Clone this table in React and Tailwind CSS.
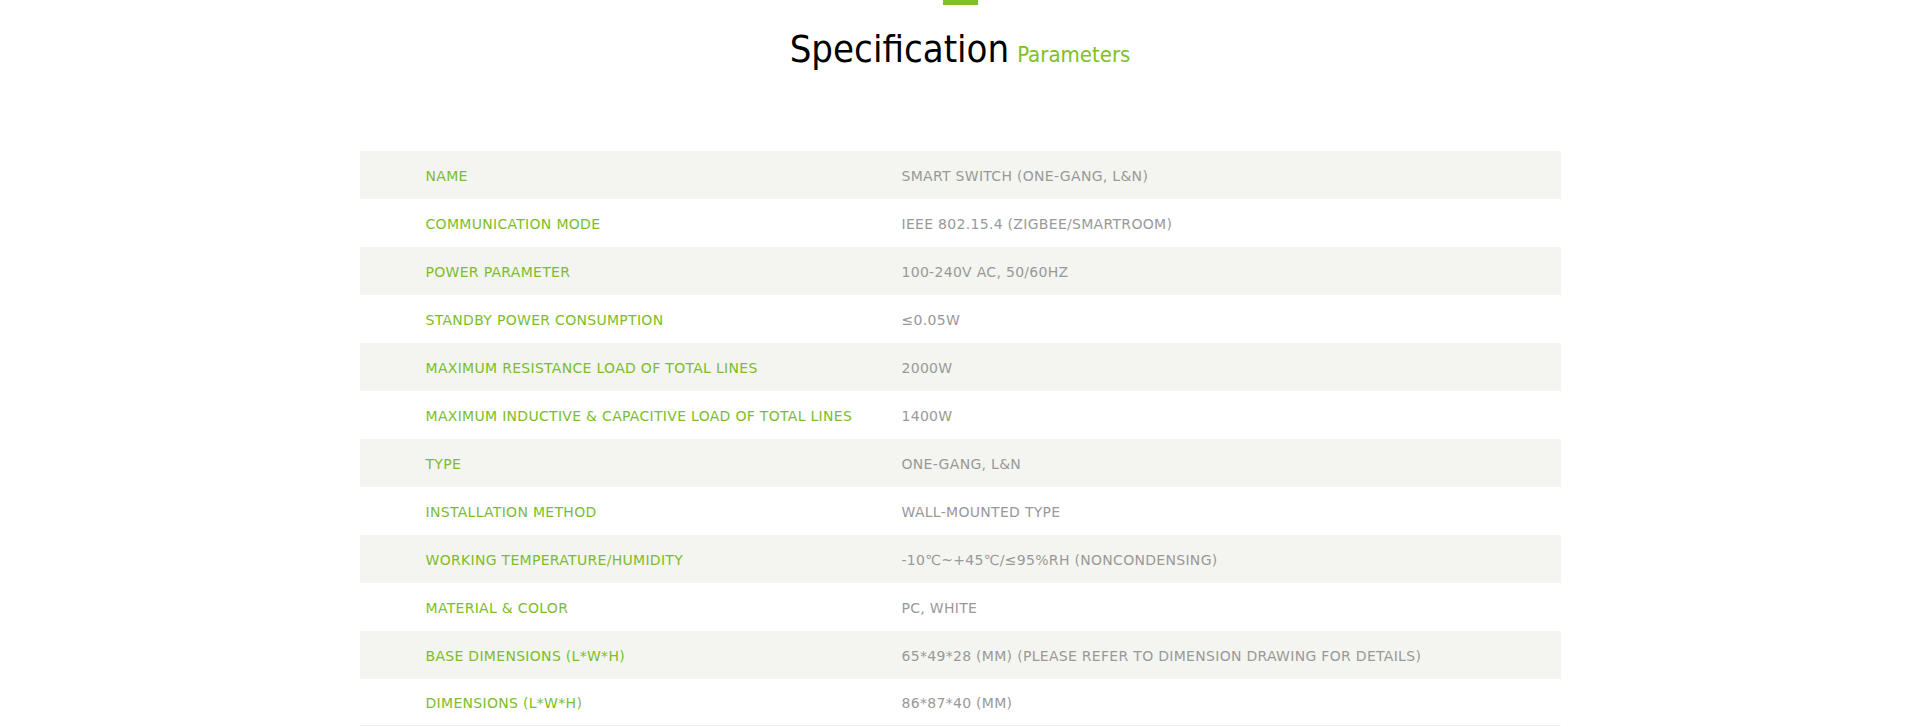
import React from "react";

const specs = [
  ["NAME", "SMART SWITCH (ONE-GANG, L&N)"],
  ["COMMUNICATION MODE", "IEEE 802.15.4 (ZIGBEE/SMARTROOM)"],
  ["POWER PARAMETER", "100-240V AC, 50/60HZ"],
  ["STANDBY POWER CONSUMPTION", "≤0.05W"],
  ["MAXIMUM RESISTANCE LOAD OF TOTAL LINES", "2000W"],
  ["MAXIMUM INDUCTIVE & CAPACITIVE LOAD OF TOTAL LINES", "1400W"],
  ["TYPE", "ONE-GANG, L&N"],
  ["INSTALLATION METHOD", "WALL-MOUNTED TYPE"],
  ["WORKING TEMPERATURE/HUMIDITY", "-10℃~+45℃/≤95%RH (NONCONDENSING)"],
  ["MATERIAL & COLOR", "PC, WHITE"],
  ["BASE DIMENSIONS (L*W*H)", "65*49*28 (MM) (PLEASE REFER TO DIMENSION DRAWING FOR DETAILS)"],
  ["DIMENSIONS (L*W*H)", "86*87*40 (MM)"],
];

const App = () => {
  return (
    <section className="w-full bg-white">
      <div className="flex flex-col items-center font-['DejaVu_Sans_Condensed','DejaVu_Sans',sans-serif]">
        <div className="w-[35px] h-[5px] bg-[#7dc124]"></div>
        <h2 className="mt-[25px] flex items-baseline leading-none">
          <span className="text-[38px] text-black">Specification</span>
          <span className="ml-[8px] text-[22px] text-[#7dc124]">Parameters</span>
        </h2>
      </div>
      <div className="w-[1201px] mx-auto mt-[83px] font-['DejaVu_Sans',sans-serif]">
        {specs.map((item, index) => (
          <div
            key={index}
            className={`flex items-center pt-[2px] text-[14px] tracking-[0.3px] ${
              index === specs.length - 1 ? "h-[47px] border-b border-[#eef0ea]" : "h-[48px]"
            } ${index % 2 === 0 ? "bg-[#f4f5f0]" : "bg-white"}`}
          >
            <div className="w-[542px] pl-[66px] text-[#7cbd2a]">{item[0]}</div>
            <div className="flex-1 text-[#999999]">{item[1]}</div>
          </div>
        ))}
      </div>
    </section>
  );
};

export default App;
